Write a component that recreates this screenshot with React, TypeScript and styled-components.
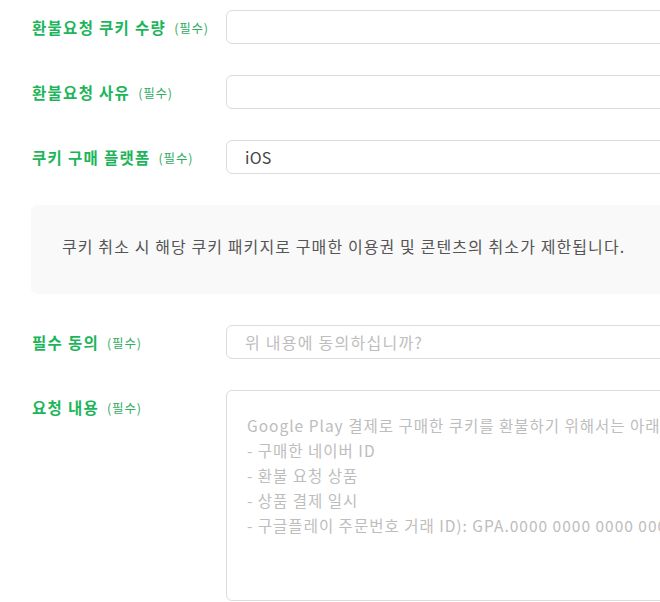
import React from "react";
import styled, { createGlobalStyle } from "styled-components";

const Global = createGlobalStyle`
  html, body { margin: 0; padding: 0; background: #fff; overflow: hidden; }
  body { font-family: "Noto Sans CJK KR", "Noto Sans", sans-serif; }
  * { box-sizing: border-box; }
`;

const Form = styled.div`
  width: 1000px;
  padding: 10px 0 0 31px;
  display: flex;
  flex-direction: column;
  gap: 31px;
`;

const Row = styled.div<{ $top?: boolean }>`
  display: flex;
  align-items: ${(p) => (p.$top ? "flex-start" : "center")};
`;

const Label = styled.div`
  width: 195px;
  flex: none;
  height: 34px;
  padding-left: 1px;
  display: flex;
  align-items: center;
  gap: 8px;
  color: #1db55b;
  font-size: 15.5px;
  font-weight: 700;
  letter-spacing: 1.3px;
`;

const Required = styled.span`
  font-size: 12.5px;
  font-weight: 400;
  color: #2fae62;
  letter-spacing: 0.8px;
`;

const Field = styled.div<{ $placeholder?: boolean }>`
  flex: 1;
  height: 34px;
  border: 1px solid #dcdcdc;
  border-radius: 6px;
  padding: 0 18px;
  display: flex;
  align-items: center;
  font-size: 16px;
  letter-spacing: ${(p) => (p.$placeholder ? "1.25px" : "0.3px")};
  color: ${(p) => (p.$placeholder ? "#bdbdbd" : "#444")};
  white-space: nowrap;
`;

const Area = styled.div`
  flex: 1;
  height: 211px;
  border: 1px solid #dcdcdc;
  border-radius: 6px;
  padding: 22px 20px;
  font-size: 15.5px;
  line-height: 25px;
  letter-spacing: 1px;
  color: #bdbdbd;
  white-space: pre;
  overflow: hidden;
`;

const Notice = styled.div`
  height: 89px;
  background: #f9f9f9;
  border-radius: 6px;
  display: flex;
  align-items: center;
  padding: 0 0 8px 31px;
  font-size: 16px;
  letter-spacing: 1.1px;
  color: #555;
  white-space: nowrap;
`;

const FormRow = ({
  label,
  children,
  top,
}: {
  label: string;
  children: React.ReactNode;
  top?: boolean;
}) => (
  <Row $top={top}>
    <Label>
      {label}
      <Required>(필수)</Required>
    </Label>
    {children}
  </Row>
);

export default function App() {
  return (
    <>
      <Global />
      <Form>
        <FormRow label="환불요청 쿠키 수량">
          <Field />
        </FormRow>
        <FormRow label="환불요청 사유">
          <Field />
        </FormRow>
        <FormRow label="쿠키 구매 플랫폼">
          <Field>iOS</Field>
        </FormRow>
        <Notice>
          쿠키 취소 시 해당 쿠키 패키지로 구매한 이용권 및 콘텐츠의 취소가 제한됩니다.
        </Notice>
        <FormRow label="필수 동의">
          <Field $placeholder>위 내용에 동의하십니까?</Field>
        </FormRow>
        <FormRow label="요청 내용" top>
          <Area>
            {`Google Play 결제로 구매한 쿠키를 환불하기 위해서는 아래 정보가 필요합니다.
- 구매한 네이버 ID
- 환불 요청 상품
- 상품 결제 일시
- 구글플레이 주문번호 거래 ID): GPA.0000 0000 0000 00000`}
          </Area>
        </FormRow>
      </Form>
    </>
  );
}
